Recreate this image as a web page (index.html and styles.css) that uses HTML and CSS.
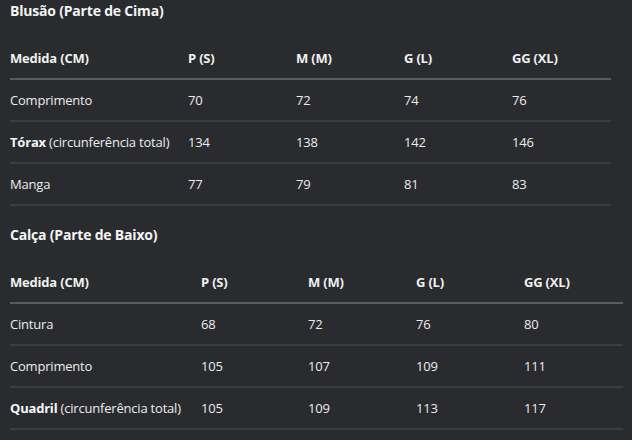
FILE: index.html
```html
<!DOCTYPE html>
<html lang="pt">
<head>
<meta charset="utf-8">
<title>Tabela de Medidas</title>
<link rel="stylesheet" href="styles.css">
</head>
<body>
<main class="page">
  <section class="size-block">
    <h3 class="block-title">Blusão (Parte de Cima)</h3>
    <table class="size-table top">
      <colgroup>
        <col class="c-label"><col class="c-p"><col class="c-m"><col class="c-g"><col class="c-gg">
      </colgroup>
      <thead>
        <tr><th>Medida (CM)</th><th>P (S)</th><th>M (M)</th><th>G (L)</th><th>GG (XL)</th></tr>
      </thead>
      <tbody>
        <tr><td>Comprimento</td><td>70</td><td>72</td><td>74</td><td>76</td></tr>
        <tr><td><strong>Tórax</strong> (circunferência total)</td><td>134</td><td>138</td><td>142</td><td>146</td></tr>
        <tr><td>Manga</td><td>77</td><td>79</td><td>81</td><td>83</td></tr>
      </tbody>
    </table>
  </section>
  <section class="size-block second">
    <h3 class="block-title">Calça (Parte de Baixo)</h3>
    <table class="size-table bottom">
      <colgroup>
        <col class="c-label"><col class="c-p"><col class="c-m"><col class="c-g"><col class="c-gg">
      </colgroup>
      <thead>
        <tr><th>Medida (CM)</th><th>P (S)</th><th>M (M)</th><th>G (L)</th><th>GG (XL)</th></tr>
      </thead>
      <tbody>
        <tr><td>Cintura</td><td>68</td><td>72</td><td>76</td><td>80</td></tr>
        <tr><td>Comprimento</td><td>105</td><td>107</td><td>109</td><td>111</td></tr>
        <tr><td><strong>Quadril</strong> (circunferência total)</td><td>105</td><td>109</td><td>113</td><td>117</td></tr>
      </tbody>
    </table>
  </section>
</main>
</body>
</html>
```
FILE: styles.css
```css
html, body {
  margin: 0;
  background: #2a2b2f;
}
body {
  font-family: "Open Sans", "Noto Sans", "Liberation Sans", sans-serif;
  font-size: 13px;
  line-height: 20px;
  letter-spacing: -0.2px;
  color: #ececec;
}
.page {
  padding: 1px 10px 0;
}
.size-block.second {
  margin-top: 19px;
}
.block-title {
  margin: 0 0 17px;
  font-size: 14px;
  line-height: 20px;
  font-weight: 700;
  color: #f4f4f4;
}
.size-table {
  border-collapse: collapse;
  table-layout: fixed;
}
.size-table.top { width: 601px; }
.size-table.bottom { width: 613px; }
.top .c-label { width: 178px; }
.bottom .c-label { width: 191px; }
.top .c-p { width: 108px; }
.bottom .c-p { width: 107px; }
.c-m, .c-g { width: 108px; }
.c-gg { width: 99px; }
.size-table th,
.size-table td {
  padding: 10px 0;
  text-align: left;
  white-space: nowrap;
  vertical-align: middle;
}
.size-table th {
  font-weight: 700;
  color: #f0f0f0;
  border-bottom: 2px solid #5b5c60;
}
.size-table td {
  border-bottom: 2px solid #3b3c40;
}
.size-table strong {
  font-weight: 700;
  color: #f6f6f6;
}
```
